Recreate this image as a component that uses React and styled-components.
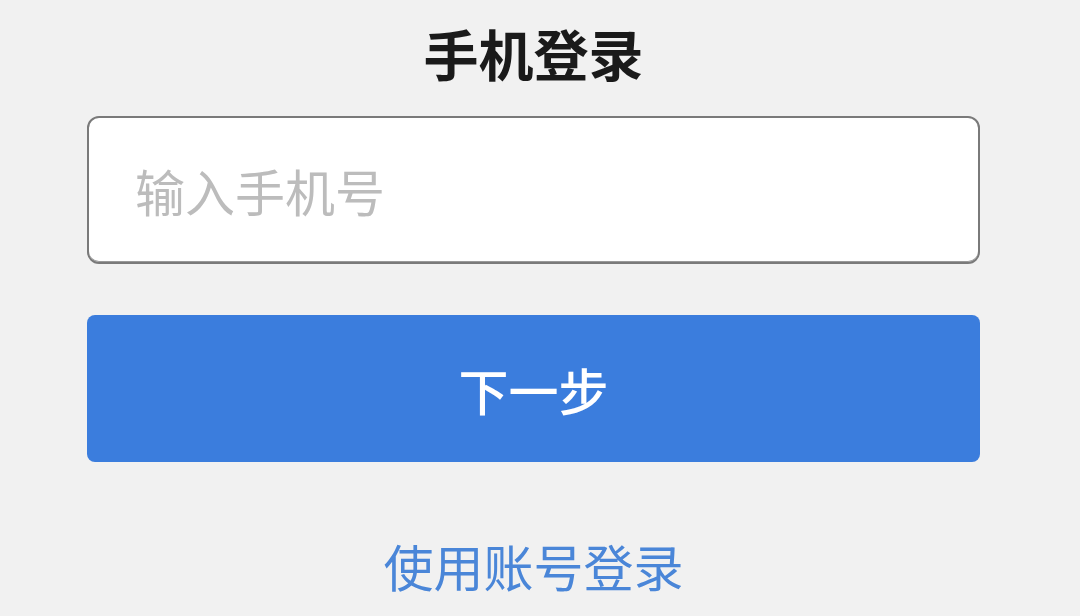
import React from 'react'
import styled, { createGlobalStyle } from 'styled-components'

const GlobalStyle = createGlobalStyle`
  html, body {
    margin: 0;
    padding: 0;
    background: #f1f1f1;
    font-family: "Noto Sans CJK SC", "Noto Sans", sans-serif;
  }
`;

const Page = styled.div`
  width: 1080px;
  height: 616px;
  overflow: hidden;
  background: #f1f1f1;
  display: flex;
  flex-direction: column;
  padding-left: 87px;
  box-sizing: border-box;
`;

const Form = styled.div`
  width: 893px;
  display: flex;
  flex-direction: column;
  align-items: stretch;
`;

const Title = styled.h2`
  margin: 19px 0 0;
  height: 97px;
  line-height: 66px;
  font-size: 55px;
  font-weight: 700;
  color: #1a1a1a;
  text-align: center;
`;

const Input = styled.input`
  box-sizing: border-box;
  height: 148px;
  border: 2px solid #7a7a7a;
  border-radius: 12px;
  background: #fff;
  padding: 0 0 0 46px;
  font-family: inherit;
  font-size: 50px;
  color: #333;
  outline: none;
  box-shadow: inset 0 -1px 0 #999;

  &::placeholder {
    color: #bcbcbc;
  }
`;

const Button = styled.button`
  margin-top: 51px;
  height: 147px;
  border: none;
  border-radius: 8px;
  background: #3b7ddd;
  color: #fff;
  font-family: inherit;
  font-size: 50px;
  font-weight: 500;
  cursor: pointer;
  padding: 0;
`;

const Link = styled.a`
  margin-top: 68px;
  text-align: center;
  font-size: 50px;
  color: #4a86d8;
  text-decoration: none;
  line-height: 70px;
`;

export default function App() {
  return (
    <Page>
      <GlobalStyle />
      <Form>
        <Title>手机登录</Title>
        <Input placeholder="输入手机号" />
        <Button>下一步</Button>
        <Link href="#">使用账号登录</Link>
      </Form>
    </Page>
  )
}
